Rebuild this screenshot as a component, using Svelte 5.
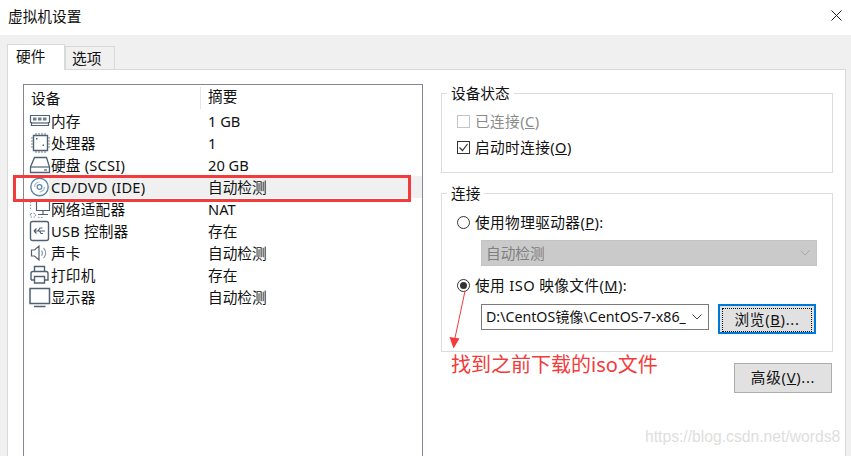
<script>
	const devices = [
		{ icon: 'mem', name: '内存', value: '1 GB' },
		{ icon: 'cpu', name: '处理器', value: '1' },
		{ icon: 'disk', name: '硬盘 (SCSI)', value: '20 GB' },
		{ icon: 'cd', name: 'CD/DVD (IDE)', value: '自动检测', selected: true },
		{ icon: 'net', name: '网络适配器', value: 'NAT' },
		{ icon: 'usb', name: 'USB 控制器', value: '存在' },
		{ icon: 'sound', name: '声卡', value: '自动检测' },
		{ icon: 'print', name: '打印机', value: '存在' },
		{ icon: 'display', name: '显示器', value: '自动检测' }
	];
</script>

{#snippet icon(kind)}
	<svg class="icon" width="22" height="22" viewBox="0 0 22 22" fill="none" stroke="#4f6272" stroke-width="1.2">
		{#if kind === 'mem'}
			<path d="M1.500 5.500h19v7h-1v3h-17v-3h-1z" />
			<path d="M4 7.500h3.500v3H4zM9 7.500h3.500v3H9zM14 7.500h3.500v3H14z" fill="#6d7e8c" stroke="none" />
			<path d="M2 13h18" />
		{:else if kind === 'cpu'}
			<path d="M4.500 3.500h14v15h-14z" stroke-width="1.400" />
			<path d="M7 1v2M10 1v2M13 1v2M16 1v2M7 19v2M10 19v2M13 19v2M16 19v2M2 6h2M2 9h2M2 12h2M2 15h2M19 6h2M19 9h2M19 12h2M19 15h2" stroke="#7b8a97" />
			<path d="M7 6h1.500v1.500H7zM13.500 12.500H15V14h-1.500z" fill="#4f6272" stroke="none" />
		{:else if kind === 'disk'}
			<path d="M5.500 3.500h12l3 9.500v5.500h-19V13z" stroke-width="1.300" />
			<path d="M1.500 13h19" />
			<path d="M15 16h3" />
		{:else if kind === 'cd'}
			<circle cx="10.500" cy="11" r="8.700" stroke="#5f86a8" stroke-width="1.400" />
			<circle cx="10.500" cy="11" r="2.400" stroke="#5f86a8" />
			<path d="M5.500 11a5 5 0 0 1 5-5M15.500 11a5 5 0 0 1-5 5" stroke="#a9bfd2" />
		{:else if kind === 'net'}
			<path d="M7.500 3.500h13v9h-13zM14 12.500v3.500M9 16.500h10" />
			<path d="M1.500 3.500h5M1.500 3.500v8M1.500 15.500h5v3.500h-5zM9 19.500h6" stroke="#8b99a5" stroke-dasharray="1.500 1.500" />
		{:else if kind === 'usb'}
			<rect x="1.500" y="1.500" width="18" height="19" rx="2" stroke-width="1.400" />
			<path d="M5 11h11M5 11l2.500-2.500M5 11l2.500 2.500M9 11l2-3h2.500M10.500 11l1.500 2.500h2" />
		{:else if kind === 'sound'}
			<path d="M2.500 8h3l4.500-4v14l-4.500-4h-3z" />
			<path d="M12.500 8.500a4 4 0 0 1 0 5M14.500 6a7 7 0 0 1 0 10" stroke="#8b99a5" />
		{:else if kind === 'print'}
			<path d="M5.500 7V2.500h10V7M2 16V9.500q0-2 2-2h13q2 0 2 2V16h-3.500M5.500 16H2M5.500 12.500h10v6.500h-10z" stroke-width="1.400" />
		{:else}
			<path d="M1 2.500h19.500v15H1z" stroke-width="1.500" />
			<path d="M5 20.500h11.500" stroke-width="1.500" />
		{/if}
	</svg>
{/snippet}

<div class="window">
	<header class="titlebar">
		<span>虚拟机设置</span>
		<svg width="11" height="11" viewBox="0 0 11 11" stroke="#222" stroke-width="1"><path d="M.5.500l10 10M10.500.500l-10 10" /></svg>
	</header>

	<div class="body">
		<div class="tabs">
			<div class="tab active">硬件</div>
			<div class="tab">选项</div>
		</div>

		<div class="panel">
			<section class="list">
				<div class="row head">
					<span class="c1">设备</span>
					<span class="c2">摘要</span>
				</div>
				{#each devices as d}
					<div class="row" class:selected={d.selected}>
						<span class="c1">{@render icon(d.icon)}<span class="name">{d.name}</span></span>
						<span class="c2">{d.value}</span>
					</div>
				{/each}
			</section>

			<div class="side">
				<fieldset class="status">
					<legend>设备状态</legend>
					<div class="opt disabled"><i class="check"></i>已连接(<u>C</u>)</div>
					<div class="opt">
						<i class="check on">
							<svg width="11" height="11" viewBox="0 0 11 11" fill="none" stroke="#333" stroke-width="1.200"><path d="M1.500 5.500l3 3 5-6.500" /></svg>
						</i>启动时连接(<u>O</u>)
					</div>
				</fieldset>

				<fieldset class="conn">
					<legend>连接</legend>
					<div class="opt"><i class="radio"></i>使用物理驱动器(<u>P</u>):</div>
					<div class="select off">
						<span>自动检测</span>
						<svg width="10" height="6" viewBox="0 0 10 6" fill="none" stroke="#a8a8a8"><path d="M.5.500l4.500 4.500 4.500-4.500" /></svg>
					</div>
					<div class="opt iso"><i class="radio on"></i>使用 ISO 映像文件(<u>M</u>):</div>
					<div class="pick">
						<div class="select path">
							<span>D:\CentOS镜像\CentOS-7-x86_</span>
							<svg width="10" height="6" viewBox="0 0 10 6" fill="none" stroke="#444"><path d="M.5.500l4.500 4.500 4.500-4.500" /></svg>
						</div>
						<button class="browse" type="button"><span>浏览(<u>B</u>)...</span></button>
					</div>
				</fieldset>

				<button class="advanced" type="button">高级(<u>V</u>)...</button>
			</div>
		</div>
	</div>

	<div class="redbox"></div>
	<svg class="arrow" width="24" height="64" viewBox="0 0 24 64">
		<path d="M18 1L8 48" stroke="#f33b3b" stroke-width="1" />
		<path d="M2.500 47l10 1.500-6 10z" fill="#f33b3b" />
	</svg>
	<div class="note">找到之前下载的iso文件</div>
	<div class="mark">https://blog.csdn.net/words8</div>
</div>

<style>
	:global(body) {
		margin: 0;
	}
	.window {
		position: relative;
		width: 851px;
		height: 456px;
		overflow: hidden;
		background: #fff;
		color: #111;
		font-family: "Noto Sans", "Noto Sans CJK SC", sans-serif;
		font-size: 14.67px;
		line-height: 22px;
	}
	.titlebar {
		height: 35px;
		display: flex;
		align-items: center;
		justify-content: space-between;
		padding: 0 9px 4px 8px;
		box-sizing: border-box;
	}
	.body {
		height: 421px;
		background: #f0f0f0;
		padding: 9px 5px 0 7px;
		box-sizing: border-box;
	}
	.tabs {
		display: flex;
		height: 25px;
		align-items: flex-end;
	}
	.tab {
		width: 50px;
		height: 23px;
		background: #f0f0f0;
		border: 1px solid #d9d9d9;
		border-bottom: 0;
		box-sizing: border-box;
		line-height: 22px;
		padding-left: 6px;
	}
	.tab.active {
		width: 58px;
		height: 26px;
		background: #fff;
		margin-bottom: -1px;
		position: relative;
		padding-left: 8px;
	}
	.panel {
		height: 400px;
		box-sizing: border-box;
		background: #fff;
		border: 1px solid #d9d9d9;
		padding: 14px 12px 0 15px;
		display: flex;
		gap: 18px;
	}
	.list {
		width: 400px;
		height: 400px;
		flex: none;
		box-sizing: border-box;
		border: 1px solid #828790;
	}
	.row {
		display: flex;
		height: 22px;
		align-items: center;
		white-space: nowrap;
	}
	.c1 {
		width: 177px;
		padding-left: 5px;
		box-sizing: border-box;
		display: flex;
		align-items: center;
	}
	.c2 {
		flex: 1;
		padding-left: 7px;
		align-self: stretch;
	}
	.name {
		letter-spacing: .2px;
	}
	.head {
		height: 25px;
	}
	.head .c1 {
		padding-left: 7px;
		border-right: 1px solid #e5e5e5;
		height: 22px;
	}
	.icon {
		flex: none;
	}
	.selected {
		background: linear-gradient(to right, #fff 25px, #f0f0f0 25px);
	}
	.side {
		width: 392px;
		flex: none;
	}
	fieldset {
		margin: 0;
		padding: 0;
		border: 1px solid #dcdcdc;
		box-sizing: border-box;
		min-width: 0;
	}
	legend {
		margin-left: -10px;
		padding: 0 4px;
		line-height: 20px;
	}
	.status {
		height: 90px;
		margin-top: -1px;
		padding: 5px 15px 0;
	}
	.conn {
		height: 169px;
		margin-top: 10px;
		padding: 6px 15px 0;
	}
	.opt {
		display: flex;
		align-items: center;
		height: 26px;
		white-space: pre;
		letter-spacing: .4px;
	}
	.disabled {
		color: #8a8a8a;
	}
	.check {
		width: 13px;
		height: 13px;
		box-sizing: border-box;
		border: 1px solid #333;
		margin-right: 5px;
		display: flex;
		align-items: center;
		justify-content: center;
	}
	.disabled .check {
		border-color: #c4c4c4;
	}
	.radio {
		width: 13px;
		height: 13px;
		box-sizing: border-box;
		border: 1px solid #333;
		border-radius: 50%;
		margin-right: 5px;
		position: relative;
	}
	.radio.on::after {
		content: "";
		position: absolute;
		inset: 2px;
		border-radius: 50%;
		background: #333;
	}
	.select {
		height: 26px;
		box-sizing: border-box;
		border: 1px solid #7a7a7a;
		display: flex;
		align-items: center;
		justify-content: space-between;
		padding: 0 6px 0 4px;
		white-space: nowrap;
	}
	.select.off {
		margin: 5px 0 0 24px;
		width: 336px;
		background: #cacaca;
		border-color: #c4c4c4;
		color: #808080;
	}
	.iso {
		margin-top: 6px;
	}
	.pick {
		display: flex;
		margin: 6px 0 0 24px;
		gap: 9px;
	}
	.path {
		width: 228px;
		overflow: hidden;
		font-size: 14.2px;
	}
	.path span {
		overflow: hidden;
	}
	.browse {
		width: 98px;
		height: 30px;
		padding: 2px 2px 2px;
		box-sizing: border-box;
		border: 2px solid #0078d7;
		background: #e1e1e1;
		font: inherit;
		color: #111;
		letter-spacing: .7px;
	}
	.browse span {
		display: block;
		line-height: 20px;
		padding-bottom: 2px;
		border: 1px dotted #111;
	}
	.advanced {
		display: block;
		width: 98px;
		height: 30px;
		margin: 11px 1px 0 auto;
		padding: 0 0 2px;
		box-sizing: border-box;
		border: 1px solid #adadad;
		background: #e1e1e1;
		font: inherit;
		color: #111;
		letter-spacing: .7px;
	}
	.redbox {
		position: absolute;
		left: 13px;
		top: 175px;
		width: 398px;
		height: 27px;
		box-sizing: border-box;
		border: 3px solid #f33b3b;
	}
	.arrow {
		position: absolute;
		left: 447px;
		top: 290px;
	}
	.note {
		position: absolute;
		left: 451px;
		top: 354px;
		color: #f33b3b;
		font-size: 20px;
		line-height: 22px;
	}
	.mark {
		position: absolute;
		left: 645px;
		top: 427px;
		color: #dedede;
		font-family: "Liberation Sans", sans-serif;
		font-size: 15.7px;
		line-height: 20px;
	}
</style>
